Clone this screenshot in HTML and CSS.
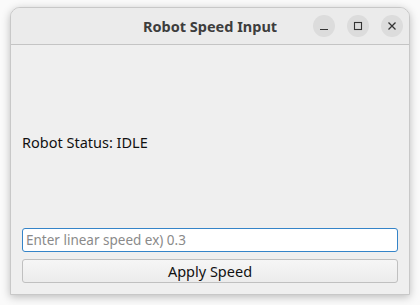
FILE: index.html
```html
<!DOCTYPE html>
<html>
<head>
  <title>Robot Speed Input</title>
  <link rel="stylesheet" href="styles.css">
</head>
<body>
  <div class="window">
    <div class="titlebar">
      <span class="title">Robot Speed Input</span>
      <div class="controls">
        <button class="ctl" aria-label="Minimize">
          <svg width="10" height="10" viewBox="0 0 10 10"><path d="M1 8.5h8" stroke="#333" stroke-width="1.2"/></svg>
        </button>
        <button class="ctl" aria-label="Maximize">
          <svg width="10" height="10" viewBox="0 0 10 10"><rect x="1.5" y="1.5" width="7" height="7" fill="none" stroke="#333" stroke-width="1.1"/></svg>
        </button>
        <button class="ctl" aria-label="Close">
          <svg width="10" height="10" viewBox="0 0 10 10"><path d="M1.5 1.5l7 7M8.5 1.5l-7 7" stroke="#333" stroke-width="1.3"/></svg>
        </button>
      </div>
    </div>
    <div class="content">
      <div class="status">Robot Status: IDLE</div>
      <input type="text" class="speed-input" placeholder="Enter linear speed ex) 0.3">
      <button class="apply-button">Apply Speed</button>
    </div>
  </div>
</body>
</html>
```

FILE: styles.css
```css
body {
  margin: 0;
  padding: 7px 10px 10px 10px;
  background: #fafafa;
  font-family: "Noto Sans", "DejaVu Sans", sans-serif;
}

.window {
  width: 400px;
  height: 288px;
  box-sizing: border-box;
  border: 1px solid #c8c8c8;
  border-radius: 10px 10px 0 0;
  background: #efefef;
  box-shadow: 0 2px 8px rgba(0, 0, 0, 0.25);
  display: flex;
  flex-direction: column;
  overflow: hidden;
}

.titlebar {
  height: 36px;
  flex-shrink: 0;
  background: #ebebeb;
  border-bottom: 1px solid #c4c4c4;
  display: flex;
  align-items: center;
  justify-content: center;
  position: relative;
}

.title {
  font-weight: bold;
  font-size: 14.5px;
  color: #3d3d3d;
}

.controls {
  position: absolute;
  right: 6px;
  top: 7px;
  display: flex;
  gap: 12px;
}

.ctl {
  width: 22px;
  height: 22px;
  border: none;
  border-radius: 50%;
  background: #dcdcdc;
  padding: 0;
  display: flex;
  align-items: center;
  justify-content: center;
}

.content {
  flex: 1;
  display: flex;
  flex-direction: column;
  padding: 11px 11px 11px 11px;
  gap: 7px;
}

.status {
  flex: 1;
  display: flex;
  align-items: center;
  font-size: 14.5px;
  color: #111;
  padding-top: 6px;
}

.speed-input {
  height: 24px;
  box-sizing: border-box;
  border: 1px solid #3584c8;
  border-radius: 3px;
  background: #fff;
  padding: 0 3px;
  font-family: inherit;
  font-size: 13.5px;
  outline: none;
}

.speed-input::placeholder {
  color: #8a8a8a;
}

.apply-button {
  height: 24px;
  border: 1px solid #c0c0c0;
  border-radius: 3px;
  background: linear-gradient(to bottom, #f6f6f6, #ececec);
  font-family: inherit;
  font-size: 14.5px;
  color: #111;
  padding: 0;
}
```
